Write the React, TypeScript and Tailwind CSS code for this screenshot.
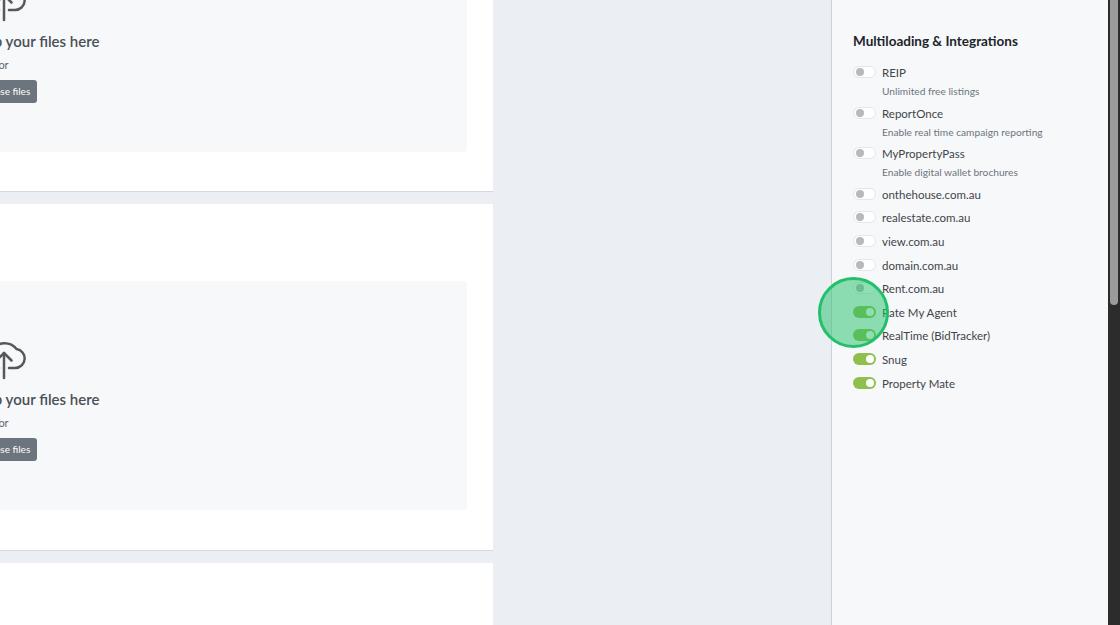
const integrations = [
  { name: "REIP", note: "Unlimited free listings", on: false },
  { name: "ReportOnce", note: "Enable real time campaign reporting", on: false },
  { name: "MyPropertyPass", note: "Enable digital wallet brochures", on: false },
  { name: "onthehouse.com.au", on: false },
  { name: "realestate.com.au", on: false },
  { name: "view.com.au", on: false },
  { name: "domain.com.au", on: false },
  { name: "Rent.com.au", on: false },
  { name: "Rate My Agent", on: true },
  { name: "RealTime (BidTracker)", on: true },
  { name: "Snug", on: true },
  { name: "Property Mate", on: true },
];

function Toggle({ on }: { on: boolean }) {
  return (
    <span
      className={`mt-[2px] flex h-[12px] w-[23px] shrink-0 items-center rounded-full px-[2px] ${
        on ? "justify-end bg-[#8fbf4d]" : "justify-start border border-[#e4e6ea] bg-white"
      }`}
    >
      <span className={`h-[8px] w-[8px] rounded-full ${on ? "bg-white" : "bg-[#b9b9b9]"}`} />
    </span>
  );
}

function CloudIcon() {
  return (
    <svg
      width="48"
      height="40"
      viewBox="0 0 48 40"
      fill="none"
      stroke="#55595e"
      strokeWidth="2.5"
      strokeLinecap="round"
      strokeLinejoin="round"
    >
      <path d="M29 28h6a9.5 9.5 0 0 0 1.5-18.9A15 15 0 0 0 12 10A9 9 0 0 0 13 28h6" />
      <path d="M24 38V13" />
      <path d="M16.5 20.5L24 13l7.5 7.5" />
    </svg>
  );
}

function UploadSection({ zone, bottom }: { zone: string; bottom: string }) {
  return (
    <section className={`border-b border-[#d5d9df] bg-white px-[26px] pt-[77px] ${bottom}`}>
      <div className={`flex flex-col items-center rounded-sm bg-[#f7f8fa] pl-[7px] text-[#495057] ${zone}`}>
        <CloudIcon />
        <h3 className="mt-[8px] text-[15px] leading-[22px] font-semibold">Drag and drop your files here</h3>
        <p className="mt-[5px] text-[11px] leading-[16px] text-[#5f666d]">or</p>
        <button className="mt-[7px] h-[23px] rounded-[3px] bg-[#6c757d] px-[7px] text-[10px] text-white">Choose files</button>
      </div>
    </section>
  );
}

export default function App() {
  return (
    <div className="relative flex h-[625px] w-[1120px] overflow-hidden bg-[#ebeef2] font-['Lato',sans-serif]">
      <div className="h-full w-[493px] shrink-0 overflow-hidden">
        <div className="ml-[-493px] mt-[-155px] flex w-[986px] flex-col gap-[12px]">
          <UploadSection zone="h-[230px] pt-[60px]" bottom="pb-[39px]" />
          <UploadSection zone="h-[229px] pt-[59px]" bottom="pb-[40px]" />
          <UploadSection zone="h-[229px] pt-[59px]" bottom="pb-[40px]" />
        </div>
      </div>

      <div className="flex-1" />

      <aside className="h-full w-[277px] shrink-0 border-l border-[#ccd1da] bg-[#f7f8fa] pl-[21px] pt-[32px]">
        <h2 className="text-[13.5px] leading-[18px] font-bold text-[#212529]">Multiloading &amp; Integrations</h2>
        <ul className="mt-[14px] flex flex-col gap-[5.6px]">
          {integrations.map((item) => (
            <li key={item.name} className="flex gap-[6px]">
              <Toggle on={item.on} />
              <div>
                <div className="text-[11.5px] leading-[18px] text-[#3f4449]">{item.name}</div>
                {item.note && <div className="mt-[1px] text-[10.2px] leading-[16px] text-[#6c757d]">{item.note}</div>}
              </div>
            </li>
          ))}
        </ul>
      </aside>

      <div className="flex h-full w-[12px] shrink-0 justify-center bg-[#2c2c2c]">
        <div className="h-[305px] w-[8px] rounded-b-full bg-[#9b9b9b]" />
      </div>

      <div className="absolute left-[818px] top-[277px] h-[71px] w-[71px] rounded-full border-[3px] border-[#22c06a] bg-[#22c06a]/50" />
    </div>
  );
}
